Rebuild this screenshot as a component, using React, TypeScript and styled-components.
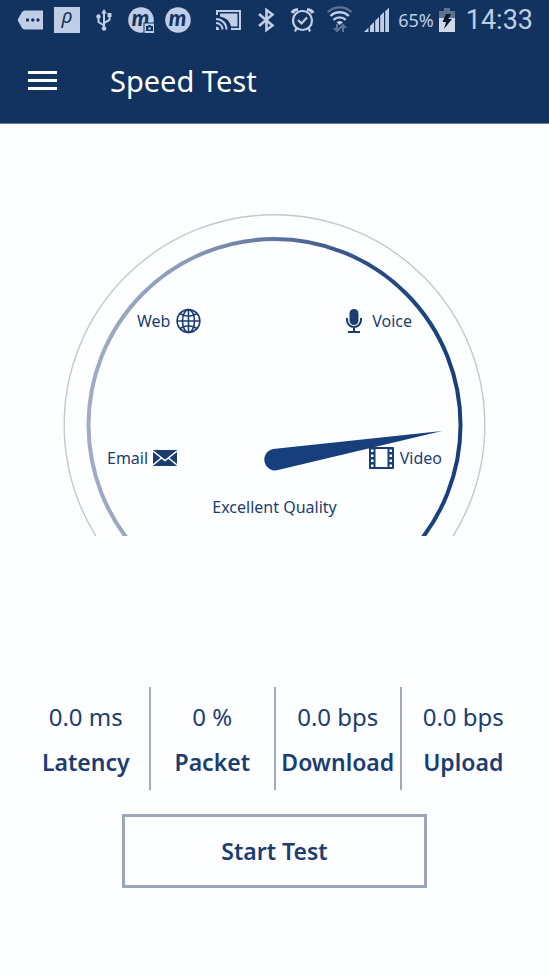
import * as React from "react";
import styled, { createGlobalStyle } from "styled-components";

const GlobalStyle = createGlobalStyle`
  * {
    box-sizing: border-box;
  }

  body {
    margin: 0;
    background: #fdfeff;
    color: #1c3d70;
    font-family: "Noto Sans", "Open Sans", sans-serif;
  }
`;

const Screen = styled.div`
  display: flex;
  flex-direction: column;
  min-height: 100vh;
`;

const Header = styled.header`
  background: #12335f;
  border-bottom: 1px solid #6d7f99;
  color: white;
`;

const StatusBar = styled.div`
  display: flex;
  justify-content: space-between;
  align-items: center;
  height: 40px;
  padding: 0 16px 0 17px;
  color: #bfcde6;
`;

const StatusGroup = styled.div`
  display: flex;
  align-items: center;
  gap: 11px;
`;

const StatusText = styled.div`
  display: flex;
  align-items: center;
  gap: 5px;
  margin-left: -3px;
  font-size: 18px;
  line-height: 24px;
`;

const Clock = styled.time`
  font-family: Roboto, sans-serif;
  font-size: 27px;
  line-height: 40px;
`;

const StatusIcon = styled.svg`
  display: block;
  width: 26px;
  height: 26px;
  flex: none;
  overflow: visible;
`;

const BatteryIcon = styled.svg`
  display: block;
  width: 16px;
  height: 26px;
  flex: none;
`;

const AppBar = styled.div`
  display: flex;
  align-items: center;
  gap: 53px;
  height: 83px;
  padding: 0 28px 2px;
`;

const MenuButton = styled.button`
  display: flex;
  flex-direction: column;
  gap: 5px;
  width: 29px;
  padding: 0;
  border: 0;
  background: none;
  cursor: pointer;
`;

const MenuLine = styled.span`
  height: 3px;
  background: white;
`;

const Title = styled.h1`
  margin: 0;
  font-size: 29px;
  line-height: 40px;
  font-weight: 400;
`;

const Main = styled.main`
  display: flex;
  flex-direction: column;
  padding-top: 89px;
`;

const Gauge = styled.section`
  display: grid;
  margin: 0 63px;
`;

const Dial = styled.svg`
  grid-area: 1 / 1;
  display: block;
  width: 100%;
`;

const DialLabels = styled.div`
  grid-area: 1 / 1;
  display: flex;
  flex-direction: column;
  padding-top: 95px;
`;

const LabelRow = styled.div<{ $inset: number; $offset: number }>`
  display: flex;
  justify-content: space-between;
  margin-bottom: ${p => p.$offset}px;
  padding: 0 ${p => p.$inset}px;
`;

const DialLabel = styled.div<{ $gap: number }>`
  display: flex;
  align-items: center;
  gap: ${p => p.$gap}px;
  font-size: 16px;
  line-height: 26px;
`;

const DialIcon = styled.svg`
  display: block;
  height: 26px;
  flex: none;
`;

const Quality = styled.div`
  font-size: 16px;
  line-height: 24px;
  text-align: center;
`;

const Stats = styled.dl`
  display: grid;
  grid-template-columns: repeat(4, minmax(0, 1fr));
  margin: 151px 24px 24px 23px;
`;

const Stat = styled.div`
  display: flex;
  flex-direction: column-reverse;
  align-items: center;
  justify-content: center;
  gap: 13px;
  height: 103px;
  padding-top: 2px;
  font-size: 24px;
  line-height: 32px;

  & + & {
    border-left: 2px solid #a0a8ba;
  }
`;

const StatName = styled.dt`
  font-size: 23px;
  font-weight: 600;
`;

const StatValue = styled.dd`
  margin: 0;
`;

const StartButton = styled.button`
  height: 74px;
  margin: 0 122px;
  border: 3px solid #9da5b8;
  background: transparent;
  color: inherit;
  font: inherit;
  font-size: 23px;
  font-weight: 600;
  cursor: pointer;
`;

const stats = [
  { name: "Latency", value: "0.0 ms" },
  { name: "Packet", value: "0 %" },
  { name: "Download", value: "0.0 bps" },
  { name: "Upload", value: "0.0 bps" }
];

const MessageIcon = () => (
  <StatusIcon viewBox="0 0 26 26" fill="currentColor">
    <path d="M8 3.5H26V22.500H8Q6 22.500 5 21L1 14Q.6 13 1 12L5 5Q6 3.500 8 3.500Z" />
    <g fill="#12335f">
      <circle cx="10.500" cy="13" r="1.700" />
      <circle cx="15.800" cy="13" r="1.700" />
      <circle cx="21" cy="13" r="1.700" />
    </g>
  </StatusIcon>
);

const ParkingIcon = () => (
  <StatusIcon viewBox="0 0 26 26">
    <rect width="26" height="26" fill="currentColor" />
    <text
      x="13"
      y="16"
      textAnchor="middle"
      fontSize="20"
      fontStyle="italic"
      fill="#12335f"
    >
      ρ
    </text>
  </StatusIcon>
);

const UsbIcon = () => (
  <StatusIcon
    viewBox="0 0 26 26"
    fill="none"
    stroke="currentColor"
    strokeWidth="2"
  >
    <path d="M13 5V22M13 18.500L7.500 15V10M13 16L18.500 13V8" />
    <g fill="currentColor" stroke="none">
      <path d="M13 2L15.800 6.500H10.200Z" />
      <circle cx="13" cy="21.500" r="2.300" />
      <circle cx="7.500" cy="9.500" r="2.200" />
      <rect x="16.500" y="6" width="4" height="4" />
    </g>
  </StatusIcon>
);

const BrandIcon = ({ camera }: { camera?: boolean }) => (
  <StatusIcon viewBox="0 0 26 26">
    <circle cx="13" cy="13" r="12.800" fill="currentColor" />
    <text
      x="12.500"
      y="18.500"
      textAnchor="middle"
      fontSize="22"
      fontWeight="900"
      fontStyle="italic"
      fontFamily="Lato, sans-serif"
      fill="#12335f"
    >
      m
    </text>
    {camera && (
      <g>
        <rect x="15.500" y="15.500" width="10.500" height="10.500" fill="#12335f" />
        <rect x="16.500" y="16.500" width="9.500" height="9.500" fill="currentColor" />
        <path d="M18 19H20L20.500 18H22.500L23 19H25V24H18Z" fill="#12335f" />
        <circle cx="21.500" cy="21.500" r="1.200" fill="currentColor" />
      </g>
    )}
  </StatusIcon>
);

const CastIcon = () => (
  <StatusIcon
    viewBox="0 0 26 26"
    fill="none"
    stroke="currentColor"
    strokeWidth="2"
  >
    <path d="M1 8V4H24V22H15" />
    <path d="M4 6.500H21.500V19.500H15Q13 11 4 9.500Z" fill="currentColor" stroke="none" />
    <path d="M0 12A10.500 10.500 0 0 1 10.500 22.500M0 16A6.500 6.500 0 0 1 6.500 22.500" />
    <path d="M0 19.500A3.200 3.200 0 0 1 3.200 23H0Z" fill="currentColor" stroke="none" />
  </StatusIcon>
);

const BluetoothIcon = () => (
  <StatusIcon
    viewBox="0 0 26 26"
    fill="none"
    stroke="currentColor"
    strokeWidth="2.6"
  >
    <path d="M6 7L19.500 18.500L13.500 23V3L19.500 7.500L6 19" />
  </StatusIcon>
);

const AlarmIcon = () => (
  <StatusIcon
    viewBox="0 0 26 26"
    fill="none"
    stroke="currentColor"
    strokeWidth="2.2"
  >
    <circle cx="12.500" cy="13.500" r="9.500" />
    <path d="M8 13L11.500 16.500L17 10.500" />
    <path d="M2 6Q3.500 2.800 8 2.500M23 6Q21.500 2.800 17 2.500" strokeWidth="3.2" />
    <path d="M6.500 21L5 24.500M18.500 21L20 24.500" />
  </StatusIcon>
);

const WifiIcon = () => (
  <StatusIcon
    viewBox="0 0 26 26"
    fill="none"
    stroke="currentColor"
    strokeWidth="2.4"
  >
    <path d="M.8 5.200A17 17 0 0 1 24.500 5.200" stroke="#5d7394" />
    <path d="M3.500 9A13 13 0 0 1 21.800 9M6.500 12.800A9 9 0 0 1 18.800 12.800" />
    <path d="M9.500 15.200Q12.700 12.800 16 15.200L12.700 18Z" fill="currentColor" stroke="none" />
    <path
      d="M10 17V23.500M7 21L10 24L13 21M16 25V18.500M13 21L16 18L19 21"
      stroke="#5d7394"
      strokeWidth="2"
    />
  </StatusIcon>
);

const SignalIcon = () => (
  <StatusIcon viewBox="0 0 26 26" fill="currentColor">
    <path d="M0 25L4.500 20.500V25ZM6 19L10 15V25H6ZM11.200 13.800L15 10V25H11.200ZM16.200 8.800L20 5V25H16.200ZM21.200 4.200L25 .8V25H21.200Z" />
  </StatusIcon>
);

const Battery = () => (
  <BatteryIcon viewBox="0 0 16 26">
    <path d="M0 4H5V1H11V4H16V11H0Z" fill="#5d7394" />
    <path d="M0 11H16V25H0Z" fill="#d0dbe8" />
    <path d="M7 7H12L9.500 12H13L5 22L7 15H3.500Z" fill="#0b1a2c" />
  </BatteryIcon>
);

const GlobeIcon = () => (
  <DialIcon
    width="26"
    viewBox="0 0 26 26"
    fill="none"
    stroke="currentColor"
    strokeWidth="1.6"
  >
    <circle cx="12.500" cy="13" r="11.400" />
    <ellipse cx="12.500" cy="13" rx="6" ry="11.400" />
    <path d="M12.500 1.500V24.500M1 13H24M4 5.500Q12.500 11 21 5.500M4 20.500Q12.500 15 21 20.500" />
  </DialIcon>
);

const MicIcon = () => (
  <DialIcon width="18" viewBox="0 0 18 26">
    <rect x="4.500" y="1" width="9" height="16" rx="4.500" fill="currentColor" />
    <path
      d="M2 10V12A7 7 0 0 0 16 12V10M9 19V24M3 24H15"
      fill="none"
      stroke="currentColor"
      strokeWidth="2"
    />
  </DialIcon>
);

const MailIcon = () => (
  <DialIcon width="24" viewBox="0 0 24 26">
    <rect y="5" width="24" height="16" fill="currentColor" />
    <path
      d="M0 6L12 15.500L24 6M0 20L8.500 13M24 20L15.500 13"
      fill="none"
      stroke="#fdfeff"
      strokeWidth="1.5"
    />
  </DialIcon>
);

const FilmIcon = () => (
  <DialIcon width="25" viewBox="0 0 25 26">
    <rect y="2" width="25" height="22" rx="1" fill="currentColor" />
    <path
      d="M6.500 4H18.500V22H6.500ZM2 4.500H4.500V7H2ZM2 9.500H4.500V12H2ZM2 14.500H4.500V17H2ZM2 19.500H4.500V22H2ZM20.500 4.500H23V7H20.500ZM20.500 9.500H23V12H20.500ZM20.500 14.500H23V17H20.500ZM20.500 19.500H23V22H20.500Z"
      fill="#fdfeff"
    />
  </DialIcon>
);

const App = () => {
  return (
    <Screen>
      <GlobalStyle />
      <Header>
        <StatusBar>
          <StatusGroup>
            <MessageIcon />
            <ParkingIcon />
            <UsbIcon />
            <BrandIcon camera />
            <BrandIcon />
          </StatusGroup>
          <StatusGroup>
            <CastIcon />
            <BluetoothIcon />
            <AlarmIcon />
            <WifiIcon />
            <SignalIcon />
            <StatusText>
              65%
              <Battery />
            </StatusText>
            <Clock>14:33</Clock>
          </StatusGroup>
        </StatusBar>
        <AppBar>
          <MenuButton aria-label="Menu">
            <MenuLine />
            <MenuLine />
            <MenuLine />
          </MenuButton>
          <Title>Speed Test</Title>
        </AppBar>
      </Header>

      <Main>
        <Gauge>
          <Dial viewBox="0 0 423 323">
            <defs>
              <linearGradient id="ring">
                <stop offset="0" stopColor="#a0acc5" />
                <stop offset="0.25" stopColor="#8d9bb7" />
                <stop offset="0.5" stopColor="#5f76a0" />
                <stop offset="0.75" stopColor="#2b4c82" />
                <stop offset="1" stopColor="#173f7c" />
              </linearGradient>
            </defs>
            <circle
              cx="211.500"
              cy="212"
              r="210.300"
              fill="none"
              stroke="#c3c8cc"
              strokeWidth="1.4"
            />
            <circle
              cx="211.500"
              cy="212"
              r="186"
              fill="none"
              stroke="url(#ring)"
              strokeWidth="4"
            />
            <path
              d="M210 236L379 218L215 257A10.800 10.800 0 1 1 210 236Z"
              fill="#173f7c"
            />
          </Dial>
          <DialLabels>
            <LabelRow $inset={74} $offset={111}>
              <DialLabel $gap={6}>
                Web
                <GlobeIcon />
              </DialLabel>
              <DialLabel $gap={9}>
                <MicIcon />
                Voice
              </DialLabel>
            </LabelRow>
            <LabelRow $inset={44} $offset={24}>
              <DialLabel $gap={5}>
                Email
                <MailIcon />
              </DialLabel>
              <DialLabel $gap={6}>
                <FilmIcon />
                Video
              </DialLabel>
            </LabelRow>
            <Quality>Excellent Quality</Quality>
          </DialLabels>
        </Gauge>

        <Stats>
          {stats.map(stat => (
            <Stat key={stat.name}>
              <StatName>{stat.name}</StatName>
              <StatValue>{stat.value}</StatValue>
            </Stat>
          ))}
        </Stats>

        <StartButton>Start Test</StartButton>
      </Main>
    </Screen>
  );
};

export default App;
